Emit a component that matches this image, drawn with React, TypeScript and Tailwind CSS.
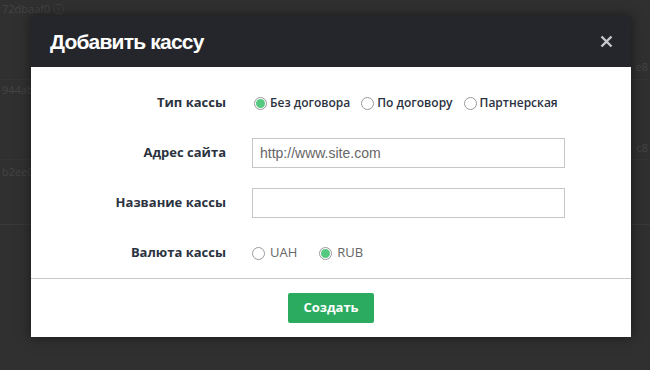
import { useState } from 'react';

type Option = { value: string; label: string };

const cashTypes: Option[] = [
  { value: 'none', label: 'Без договора' },
  { value: 'contract', label: 'По договору' },
  { value: 'partner', label: 'Партнерская' },
];

const currencies: Option[] = [
  { value: 'UAH', label: 'UAH' },
  { value: 'RUB', label: 'RUB' },
];

function Radio({ checked }: { checked: boolean }) {
  return (
    <span className="flex h-[13px] w-[13px] shrink-0 items-center justify-center rounded-full border border-[#9a9a9a] bg-white">
      {checked && <span className="h-[9px] w-[9px] rounded-full bg-[#55c97f]" />}
    </span>
  );
}

function Row({ label, children }: { label: string; children: React.ReactNode }) {
  return (
    <div className="flex h-[50px] items-center">
      <div className="w-[195px] text-right text-[13px] font-bold text-[#2b3240]">{label}</div>
      <div className="ml-[26px] flex items-center">{children}</div>
    </div>
  );
}

export default function App() {
  const [type, setType] = useState('none');
  const [currency, setCurrency] = useState('RUB');

  return (
    <div
      className="relative h-[370px] w-[650px] overflow-hidden bg-[#303030]"
      style={{ fontFamily: '"Open Sans", "Noto Sans", sans-serif' }}
    >
      {/* page behind the dialog */}
      <div className="text-[11px] text-[#444]">
        <div className="flex h-[80px] justify-between border-b border-[#353535] px-[2px] pt-[1px]">
          <span>72dbaaf0 ⓘ</span>
          <span className="mt-[58px]">e8</span>
        </div>
        <div className="flex h-[80px] justify-between border-b border-[#353535] px-[2px] pt-[2px]">
          <span>944ab1</span>
          <span className="mt-[58px]">c8</span>
        </div>
        <div className="flex h-[65px] justify-between border-b border-[#393939] px-[2px] pt-[4px]">
          <span>b2ee01</span>
        </div>
      </div>

      {/* dialog */}
      <div className="absolute left-[31px] top-[16px] w-[600px] shadow-[0_0_12px_rgba(0,0,0,0.5)]">
        <div className="flex h-[51px] items-center justify-between bg-[#25262b] pl-[19px] pr-[18px]">
          <h2
            className="text-[21px] font-bold tracking-[-0.8px] text-white"
            style={{ fontFamily: '"Liberation Sans Narrow", "Liberation Sans", Arial, sans-serif' }}
          >
            Добавить кассу
          </h2>
          <button className="text-[#c8c9cc]">
            <svg width="13" height="13" viewBox="0 0 13 13">
              <path d="M1.5 1.5 L11.5 11.5 M11.5 1.5 L1.5 11.5" stroke="currentColor" strokeWidth="2.4" />
            </svg>
          </button>
        </div>

        <div className="bg-white">
          <div className="pt-[11px]">
            <Row label="Тип кассы">
              <div className="ml-[2px] flex items-center gap-[11px]">
                {cashTypes.map((o) => (
                  <label
                    key={o.value}
                    onClick={() => setType(o.value)}
                    className="flex cursor-pointer items-center gap-[3px] text-[12px] font-semibold text-[#2b3240]"
                  >
                    <Radio checked={type === o.value} />
                    {o.label}
                  </label>
                ))}
              </div>
            </Row>
            <Row label="Адрес сайта">
              <input
                className="h-[30px] w-[313px] border border-[#c6c6c6] px-[7px] text-[14px] text-[#555] outline-none placeholder:text-[#666]"
                style={{ fontFamily: '"Liberation Sans", Arial, sans-serif' }}
                placeholder="http://www.site.com"
              />
            </Row>
            <Row label="Название кассы">
              <input className="h-[30px] w-[313px] border border-[#c6c6c6] px-[7px] text-[14px] outline-none" />
            </Row>
            <Row label="Валюта кассы">
              <div className="flex items-center gap-[22px]">
                {currencies.map((o) => (
                  <label
                    key={o.value}
                    onClick={() => setCurrency(o.value)}
                    className="flex cursor-pointer items-center gap-[5px] text-[13px] text-[#666]"
                  >
                    <Radio checked={currency === o.value} />
                    {o.label}
                  </label>
                ))}
              </div>
            </Row>
          </div>

          <div className="border-t border-[#c9c9c9] pb-[14px] pl-[257px] pt-[14px]">
            <button className="h-[30px] w-[86px] rounded-[2px] bg-[#2bab5f] text-[13px] font-bold text-white">
              Создать
            </button>
          </div>
        </div>
      </div>
    </div>
  );
}
